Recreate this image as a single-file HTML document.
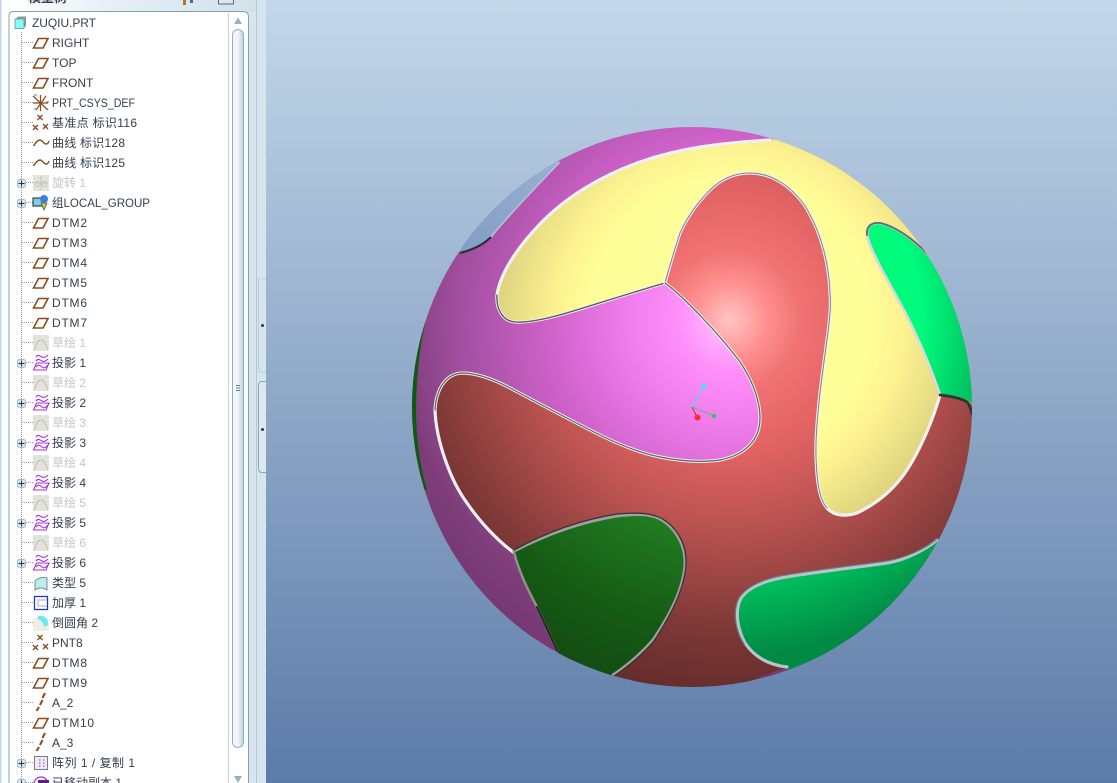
<!DOCTYPE html>
<html><head><meta charset="utf-8">
<style>
html,body{margin:0;padding:0;background:#fff;overflow:hidden}
svg{display:block}
text{font-family:"Liberation Sans","Noto Sans CJK SC",sans-serif;font-size:12px;fill:#33404e}
.g text,text.g{fill:#c6c6c6}
</style></head><body>
<svg xmlns="http://www.w3.org/2000/svg" width="1117" height="783" viewBox="0 0 1117 783">
<defs>
<linearGradient id="bg" x1="0" y1="0" x2="0" y2="1"><stop offset="0" stop-color="#c3d7e9"/><stop offset="1" stop-color="#5c7ba8"/></linearGradient>
<linearGradient id="hd" x1="0" y1="0" x2="1" y2="0"><stop offset="0" stop-color="#ffffff"/><stop offset=".45" stop-color="#e6eff5"/><stop offset="1" stop-color="#d2e1eb"/></linearGradient>
<linearGradient id="th" x1="0" y1="0" x2="1" y2="0"><stop offset="0" stop-color="#f4f8fb"/><stop offset=".5" stop-color="#f0f5f9"/><stop offset="1" stop-color="#b8d0e0"/></linearGradient>
<pattern id="hatch" width="4" height="4" patternUnits="userSpaceOnUse"><rect width="4" height="4" fill="#d5e3ed"/><path d="M0 4L4 0" stroke="#dce8f1" stroke-width="1"/></pattern>
<radialGradient id="mg" gradientUnits="userSpaceOnUse" cx="730" cy="320" r="420"><stop offset="0" stop-color="#ffc8ff"/><stop offset=".12" stop-color="#ff90fa"/><stop offset=".25" stop-color="#ef7ceb"/><stop offset=".45" stop-color="#cb60c6"/><stop offset=".65" stop-color="#a04f9e"/><stop offset=".8" stop-color="#7c3c78"/><stop offset="1" stop-color="#6e3570"/></radialGradient>
<radialGradient id="rd" gradientUnits="userSpaceOnUse" cx="730" cy="320" r="420"><stop offset="0" stop-color="#ffc4c4"/><stop offset=".09" stop-color="#ff8f8f"/><stop offset=".17" stop-color="#f07272"/><stop offset=".3" stop-color="#e46464"/><stop offset=".5" stop-color="#b85250"/><stop offset=".75" stop-color="#7a3735"/><stop offset=".9" stop-color="#652c2c"/></radialGradient>
<radialGradient id="ye" gradientUnits="userSpaceOnUse" cx="730" cy="320" r="420"><stop offset="0" stop-color="#ffff9c"/><stop offset=".33" stop-color="#ffff99"/><stop offset=".42" stop-color="#fbf190"/><stop offset=".56" stop-color="#dcd27e"/><stop offset=".7" stop-color="#c0b56c"/></radialGradient>
<radialGradient id="gn" gradientUnits="userSpaceOnUse" cx="730" cy="320" r="420"><stop offset="0" stop-color="#00ff80"/><stop offset=".46" stop-color="#00fa7c"/><stop offset=".6" stop-color="#00c060"/></radialGradient>
<radialGradient id="em" gradientUnits="userSpaceOnUse" cx="730" cy="320" r="420"><stop offset=".6" stop-color="#00c860"/><stop offset=".8" stop-color="#008a44"/></radialGradient>
<radialGradient id="dg" gradientUnits="userSpaceOnUse" cx="730" cy="320" r="420"><stop offset=".5" stop-color="#227c22"/><stop offset=".75" stop-color="#155a14"/><stop offset=".9" stop-color="#134c12"/></radialGradient>
<linearGradient id="bl" x1="0" y1="1" x2="1" y2="0"><stop offset="0" stop-color="#7f9cc4"/><stop offset="1" stop-color="#9ab2d2"/></linearGradient>
<clipPath id="sp"><circle cx="692" cy="407" r="280"/></clipPath>

<g id="pl"><path d="M33.500 6L38.500-3.500H48L43 6Z" fill="none" stroke="#8b4a1c" stroke-width="1.600"/></g>
<g id="sk"><rect x="33" y="-7" width="16" height="16" fill="#e3e3dd"/><path d="M34.500 8C36 2 38-2 41-2S46 2 47.500 8" fill="none" stroke="#c8c6b4" stroke-width="1.300"/></g>
<g id="pr" fill="none" stroke="#a62ee0" stroke-width="1.100"><path d="M36-5C38-8 40-6 42-5S46-5 48-7"/><path d="M36-1C38-4 40-2 42-1S46-1 48-3"/><path d="M33.500 8L36.500 1H49L46 8Z"/><path d="M36 5C38 2 40 3 42 5S46 5 48 3"/></g>
<g id="pt" stroke="#8b4a1c" stroke-width="1.400"><path d="M37.500-7L42.500-2M42.500-7L37.500-2M33 3L38 8M38 3L33 8M43 2L48 7M48 2L43 7"/></g>
<g id="cv"><path d="M33.500 5C36 1 38-1 40-1S44 3 46 3S48 2 49 0" fill="none" stroke="#8b4a1c" stroke-width="1.400" transform="translate(0,-1)"/></g>
<g id="ax"><path d="M42.500 4L40 9M39 11L36.500 15M45 -3L42.500 2" stroke="#8b4a1c" stroke-width="2" fill="none" transform="translate(0,-6)"/></g>
<g id="pm"><rect x="17.500" y="-2.500" width="8" height="8" rx="2" fill="#d8e8f0" stroke="#9fbccb"/><path d="M18.500 1.500H24.500M21.500-1.500V4.500" stroke="#22303c" stroke-width="1"/></g>
</defs>

<!-- viewport -->
<rect x="266" width="851" height="783" fill="url(#bg)"/>

<!-- panel -->
<rect width="266" height="783" fill="url(#hatch)"/>
<rect width="256" height="12" fill="url(#hd)"/>
<rect x="0" width="9" height="783" fill="#ffffff"/>
<rect x="0" width="1.500" height="783" fill="#bcd6ef"/>
<rect x="256" width="1" height="783" fill="#b4c9d8"/>
<text x="28" y="2" style="font-size:13px;font-weight:bold" fill="#222">模型树</text>
<rect x="183" y="0" width="3" height="5" fill="#b8722a"/><rect x="190" y="0" width="3" height="3" fill="#3a6ab0"/>
<rect x="218.500" y="-3" width="15" height="7" fill="#dbe8f4" stroke="#666"/>
<path d="M9 783V16Q9 11.500 14 11.500H243Q248.500 11.500 248.500 17V783" fill="#fff" stroke="#7fa4b8"/>
<path d="M228.500 13V783" stroke="#c0d6e4"/>
<path d="M238 17.500L242 24H234Z" fill="#8fb2c6"/>
<rect x="232.500" y="29.500" width="11" height="718" rx="5.500" fill="url(#th)" stroke="#8fb0c4"/>
<path d="M236 385.500h4M236 388h4M236 390.500h4" stroke="#5f7f94"/>
<path d="M234 776H242L238 783Z" fill="#8fb2c6"/>
<path d="M258.500 278V368Q258.500 372 262 372H266M258.500 278Q258.500 279 266 279" fill="none" stroke="#b9cfdf"/>
<path d="M266 381.500H262Q258.500 381.500 258.500 386V468Q258.500 472.500 262 472.500H266" fill="#dde8f0" stroke="#8fa6b6"/>
<rect x="261" y="324" width="3" height="3" fill="#2c3a44" rx="1.500"/>
<rect x="261" y="428" width="3" height="3" fill="#2c3a44" rx="1.500"/>

<!-- tree lines -->
<path d="M21.500 32V783" stroke="#9a9a9a" stroke-dasharray="1 1"/>
<path d="M22 42.500H33M22 62.500H33M22 82.500H33M22 102.500H33M22 122.500H33M22 142.500H33M22 162.500H33M22 182.500H33M22 202.500H33M22 222.500H33M22 242.500H33M22 262.500H33M22 282.500H33M22 302.500H33M22 322.500H33M22 342.500H33M22 362.500H33M22 382.500H33M22 402.500H33M22 422.500H33M22 442.500H33M22 462.500H33M22 482.500H33M22 502.500H33M22 522.500H33M22 542.500H33M22 562.500H33M22 582.500H33M22 602.500H33M22 622.500H33M22 642.500H33M22 662.500H33M22 682.500H33M22 702.500H33M22 722.500H33M22 742.500H33M22 762.500H33M22 782.500H33" stroke="#9a9a9a" stroke-dasharray="1 1"/>

<!-- root icon -->
<path d="M15 19.500L18 16.500H26V26L23.500 28.500H15Z" fill="#8a9aa0"/><rect x="15" y="19" width="9" height="9.500" fill="#80fff8" stroke="#7b8b90" stroke-width=".8"/>
<text x="32" y="27" textLength="64">ZUQIU.PRT</text>

<use href="#pl" y="42"/><text x="52" y="47">RIGHT</text>
<use href="#pl" y="62"/><text x="52" y="67">TOP</text>
<use href="#pl" y="82"/><text x="52" y="87">FRONT</text>
<path d="M33 96L48 110M36 110L46 96M40.500 95V111M33 103H48" stroke="#8b4a1c" stroke-width="1.200"/><path d="M34 95h3M34 109h3M46 102h3" stroke="#777" stroke-width="1"/>
<text x="52" y="107" textLength="83" lengthAdjust="spacingAndGlyphs">PRT_CSYS_DEF</text>
<use href="#pt" y="122"/><text x="52" y="127" textLength="85">基准点 标识116</text>
<use href="#cv" y="142"/><text x="52" y="147" textLength="73">曲线 标识128</text>
<use href="#cv" y="162"/><text x="52" y="167" textLength="73">曲线 标识125</text>

<use href="#pm" y="182"/>
<rect x="33" y="175" width="16" height="16" fill="#e3e3dd"/><path d="M34 183H48M41 176V190" stroke="#c8c6b4"/><circle cx="37.500" cy="184" r="2.500" fill="none" stroke="#c8c6b4"/><circle cx="44.500" cy="184" r="2.500" fill="none" stroke="#c8c6b4"/>
<text x="52" y="187" class="g">旋转 1</text>

<use href="#pm" y="202"/>
<rect x="33" y="198" width="11" height="8" fill="#7ad0e8" stroke="#222"/><circle cx="44" cy="199" r="4" fill="#3a7fe0"/><path d="M41 203L47 203L44 210Z" fill="#d8c830" stroke="#555" stroke-width=".8"/>
<text x="52" y="207" textLength="98" lengthAdjust="spacingAndGlyphs">组LOCAL_GROUP</text>

<use href="#pl" y="222"/><text x="52" y="227" textLength="35">DTM2</text>
<use href="#pl" y="242"/><text x="52" y="247" textLength="35">DTM3</text>
<use href="#pl" y="262"/><text x="52" y="267" textLength="35">DTM4</text>
<use href="#pl" y="282"/><text x="52" y="287" textLength="35">DTM5</text>
<use href="#pl" y="302"/><text x="52" y="307" textLength="35">DTM6</text>
<use href="#pl" y="322"/><text x="52" y="327" textLength="35">DTM7</text>

<use href="#sk" y="342"/><text x="52" y="347" class="g">草绘 1</text>
<use href="#pm" y="362"/><use href="#pr" y="362"/><text x="52" y="367">投影 1</text>
<use href="#sk" y="382"/><text x="52" y="387" class="g">草绘 2</text>
<use href="#pm" y="402"/><use href="#pr" y="402"/><text x="52" y="407">投影 2</text>
<use href="#sk" y="422"/><text x="52" y="427" class="g">草绘 3</text>
<use href="#pm" y="442"/><use href="#pr" y="442"/><text x="52" y="447">投影 3</text>
<use href="#sk" y="462"/><text x="52" y="467" class="g">草绘 4</text>
<use href="#pm" y="482"/><use href="#pr" y="482"/><text x="52" y="487">投影 4</text>
<use href="#sk" y="502"/><text x="52" y="507" class="g">草绘 5</text>
<use href="#pm" y="522"/><use href="#pr" y="522"/><text x="52" y="527">投影 5</text>
<use href="#sk" y="542"/><text x="52" y="547" class="g">草绘 6</text>
<use href="#pm" y="562"/><use href="#pr" y="562"/><text x="52" y="567">投影 6</text>

<path d="M35 590V581Q41 576 47 578V590Q41 586 35 590Z" fill="#b8eef0" stroke="#7d8a90"/>
<text x="52" y="587">类型 5</text>
<rect x="34.500" y="596.500" width="13" height="13" fill="#fff" stroke="#1a3fa0" stroke-width="1.300"/><path d="M47 600H38V606H47" fill="none" stroke="#b8b8ee" stroke-width="1.300"/>
<text x="52" y="607">加厚 1</text>
<path d="M33 620L38 616H42L49 624V631H33Z" fill="#efeee2"/><path d="M38 616H43Q49 618 48 625L44 627Q43 621 38 619Z" fill="#70e8f0"/>
<text x="52" y="627">倒圆角 2</text>
<use href="#pt" y="642"/><text x="52" y="647">PNT8</text>
<use href="#pl" y="662"/><text x="52" y="667" textLength="35">DTM8</text>
<use href="#pl" y="682"/><text x="52" y="687" textLength="35">DTM9</text>
<use href="#ax" y="702"/><text x="52" y="707">A_2</text>
<use href="#pl" y="722"/><text x="52" y="727" textLength="42">DTM10</text>
<use href="#ax" y="742"/><text x="52" y="747">A_3</text>
<use href="#pm" y="762"/>
<rect x="34.500" y="756.500" width="13" height="13" fill="#efeaf6" stroke="#7a7a80"/><path d="M39 760h1.500M43 760h1.500M39 763h1.500M43 763h1.500M39 766h1.500M43 766h1.500" stroke="#a030d0"/>
<text x="52" y="767" textLength="83">阵列 1 / 复制 1</text>
<use href="#pm" y="782"/>
<circle cx="41" cy="784" r="7" fill="none" stroke="#a030d0" stroke-width="1.200"/><rect x="38" y="780" width="11" height="4" fill="#5a2080"/>
<text x="52" y="787">已移动副本 1</text>

<!-- sphere -->
<g clip-path="url(#sp)">
<circle cx="692" cy="407" r="281" fill="url(#mg)"/>
<!-- blue patch -->
<path d="M460 253C472 250 483 245 491 237C503 222 530 193 560 162L520 150L440 230Z" fill="url(#bl)"/>
<path d="M491 237C503 222 530 193 560 162" fill="none" stroke="#b9c2d0" stroke-width="1.500"/>
<path d="M460 253C472 250 483 245 491 237" fill="none" stroke="#2c2c2c" stroke-width="2"/>
<!-- dark green sliver -->
<path d="M429 308C421 335 416 375 416 410C416 440 421 470 427 490L405 492L405 308Z" fill="#0f5a10"/>
<!-- yellow -->
<path d="M665 283C640 290 600 303 570 312C550 318 530 323 515 322C502 321 496 308 497 295C500 275 515 250 540 224C565 198 600 176 640 162C680 148 720 143 770 140L990 100V420L940 395C933 420 920 450 907 470C895 488 878 503 857 513C848 516 835 517 827 508C820 500 817 485 816 457C815 425 822 375 828 333C830 315 831 305 830 293C829 262 820 228 803 203C790 186 772 173 750 173C735 173 722 178 710 190C694 206 685 222 680 233C675 248 670 265 665 283Z" fill="url(#ye)"/>
<!-- bright green -->
<path d="M927 254C915 240 895 226 880 223C872 222 866 226 867 235C869 245 875 257 882 270L900 303C915 330 930 365 940 395L967 400L985 413V254Z" fill="url(#gn)"/>
<!-- red -->
<path d="M665 283C670 265 675 248 680 233C685 222 694 206 710 190C722 178 735 173 750 173C772 173 790 186 803 203C820 228 829 262 830 293C831 305 830 315 828 333C822 375 815 425 816 457C817 485 820 500 827 508C835 517 848 516 857 513C878 503 895 488 907 470C920 450 933 420 940 395L967 400L980 413V520L937 540L787 667L700 700L613 675C628 665 640 655 653 640L513 552C497 540 480 522 467 503C450 480 436 440 435 410C436 390 445 374 462 373C478 373 495 380 510 388C540 404 570 420 600 435C620 445 640 453 660 457C680 461 700 463 720 460C745 455 760 440 760 418C760 400 752 380 740 362C720 335 685 298 665 283Z" fill="url(#rd)"/>
<!-- emerald -->
<path d="M937 540C925 550 905 560 887 563C860 567 820 571 780 578C760 582 745 590 740 600C735 612 737 628 745 643C755 658 770 665 787 667L800 700L980 600Z" fill="url(#em)"/>
<!-- dark green -->
<path d="M514 552C545 535 580 522 617 516C640 513 655 514 665 522C678 532 686 548 685 565C683 590 670 615 653 640C640 655 628 665 613 675L570 690L557 650C550 636 544 622 537 607C528 590 519 572 514 552Z" fill="url(#dg)"/>

<!-- edges -->
<g fill="none" stroke-linecap="round">
<path d="M665 283C640 290 600 303 570 312C550 318 530 323 515 322C502 321 496 308 497 295C500 275 515 250 540 224C565 198 600 176 640 162C680 148 720 143 770 140" stroke="#f0f0f0" stroke-width="3.200"/>
<path d="M665 283C640 290 600 303 570 312C550 318 530 323 515 322C502 321 496 308 497 295" stroke="#555" stroke-width="1.300"/>
<path d="M940 395C933 420 920 450 907 470C895 488 878 503 857 513C848 516 835 517 827 508C820 500 817 485 816 457C815 425 822 375 828 333C830 315 831 305 830 293C829 262 820 228 803 203C790 186 772 173 750 173C735 173 722 178 710 190C694 206 685 222 680 233C675 248 670 265 665 283" stroke="#f0f0f0" stroke-width="3.200"/>
<path d="M827 508C820 500 817 485 816 457C815 425 822 375 828 333C830 315 831 305 830 293C829 262 820 228 803 203C790 186 772 173 750 173C735 173 722 178 710 190C694 206 685 222 680 233C675 248 670 265 665 283" stroke="#808080" stroke-width="1"/>
<path d="M927 254C915 240 895 226 880 223C872 222 866 226 867 235C869 245 875 257 882 270L900 303C915 330 930 365 940 395" stroke="#d8d8d8" stroke-width="2.800"/>
<path d="M927 254C915 240 895 226 880 223C872 222 866 226 867 235" stroke="#666" stroke-width="1.800"/>
<path d="M940 395C950 396 960 398 967 402C970 405 971 410 972 414" stroke="#333" stroke-width="2.800"/>
<path d="M665 283C685 298 720 335 740 362C752 380 760 400 760 418C760 440 745 455 720 460C700 463 680 461 660 457C640 453 620 445 600 435C570 420 540 404 510 388C495 380 478 373 462 373C445 374 436 390 435 410C436 440 450 480 467 503C480 522 497 540 513 552" stroke="#efefef" stroke-width="3.200"/>
<path d="M665 283C685 298 720 335 740 362C752 380 760 400 760 418C760 440 745 455 720 460C700 463 680 461 660 457C640 453 620 445 600 435C570 420 540 404 510 388C495 380 478 373 462 373C445 374 436 390 435 410" stroke="#606060" stroke-width="1.200"/>
<path d="M514 551C545 535 580 522 617 516C640 513 655 514 665 522C678 532 686 548 685 565C683 590 670 615 653 640C640 655 628 665 613 675" stroke="#a0a0a0" stroke-width="3"/>
<path d="M514 550C545 533 580 520 617 514C640 512 656 513 667 522C680 532 687 548 686 565C684 590 671 615 654 641C641 656 629 666 614 676" stroke="#333" stroke-width="1.300"/>
<path d="M514 552C519 572 528 590 537 607C544 622 550 636 557 650" stroke="#909090" stroke-width="2.500"/>
<path d="M537 607C544 622 550 636 557 650" stroke="#222" stroke-width="2"/>
<path d="M937 540C925 550 905 560 887 563C860 567 820 571 780 578C760 582 745 590 740 600C735 612 737 628 745 643C755 658 770 665 787 667" stroke="#b8c4cc" stroke-width="3.200"/>
<path d="M937 539C925 549 905 558 887 561C860 565 820 569 780 576C760 580 743 589 738 600C733 612 735 630 744 644" stroke="#6a7888" stroke-width="1.200"/>
</g>
</g>
<!-- axes -->
<path d="M692 407L704 386" stroke="#40e0ff"/><circle cx="704" cy="386" r="2.500" fill="#40e0ff"/>
<path d="M692 407L697 417" stroke="#e02020"/><circle cx="697.500" cy="417.500" r="3" fill="#ff2828"/>
<path d="M692 407L714 416" stroke="#20d040" stroke-dasharray="2 1"/><circle cx="714" cy="416" r="2" fill="#20d040"/>
</svg>
</body></html>
